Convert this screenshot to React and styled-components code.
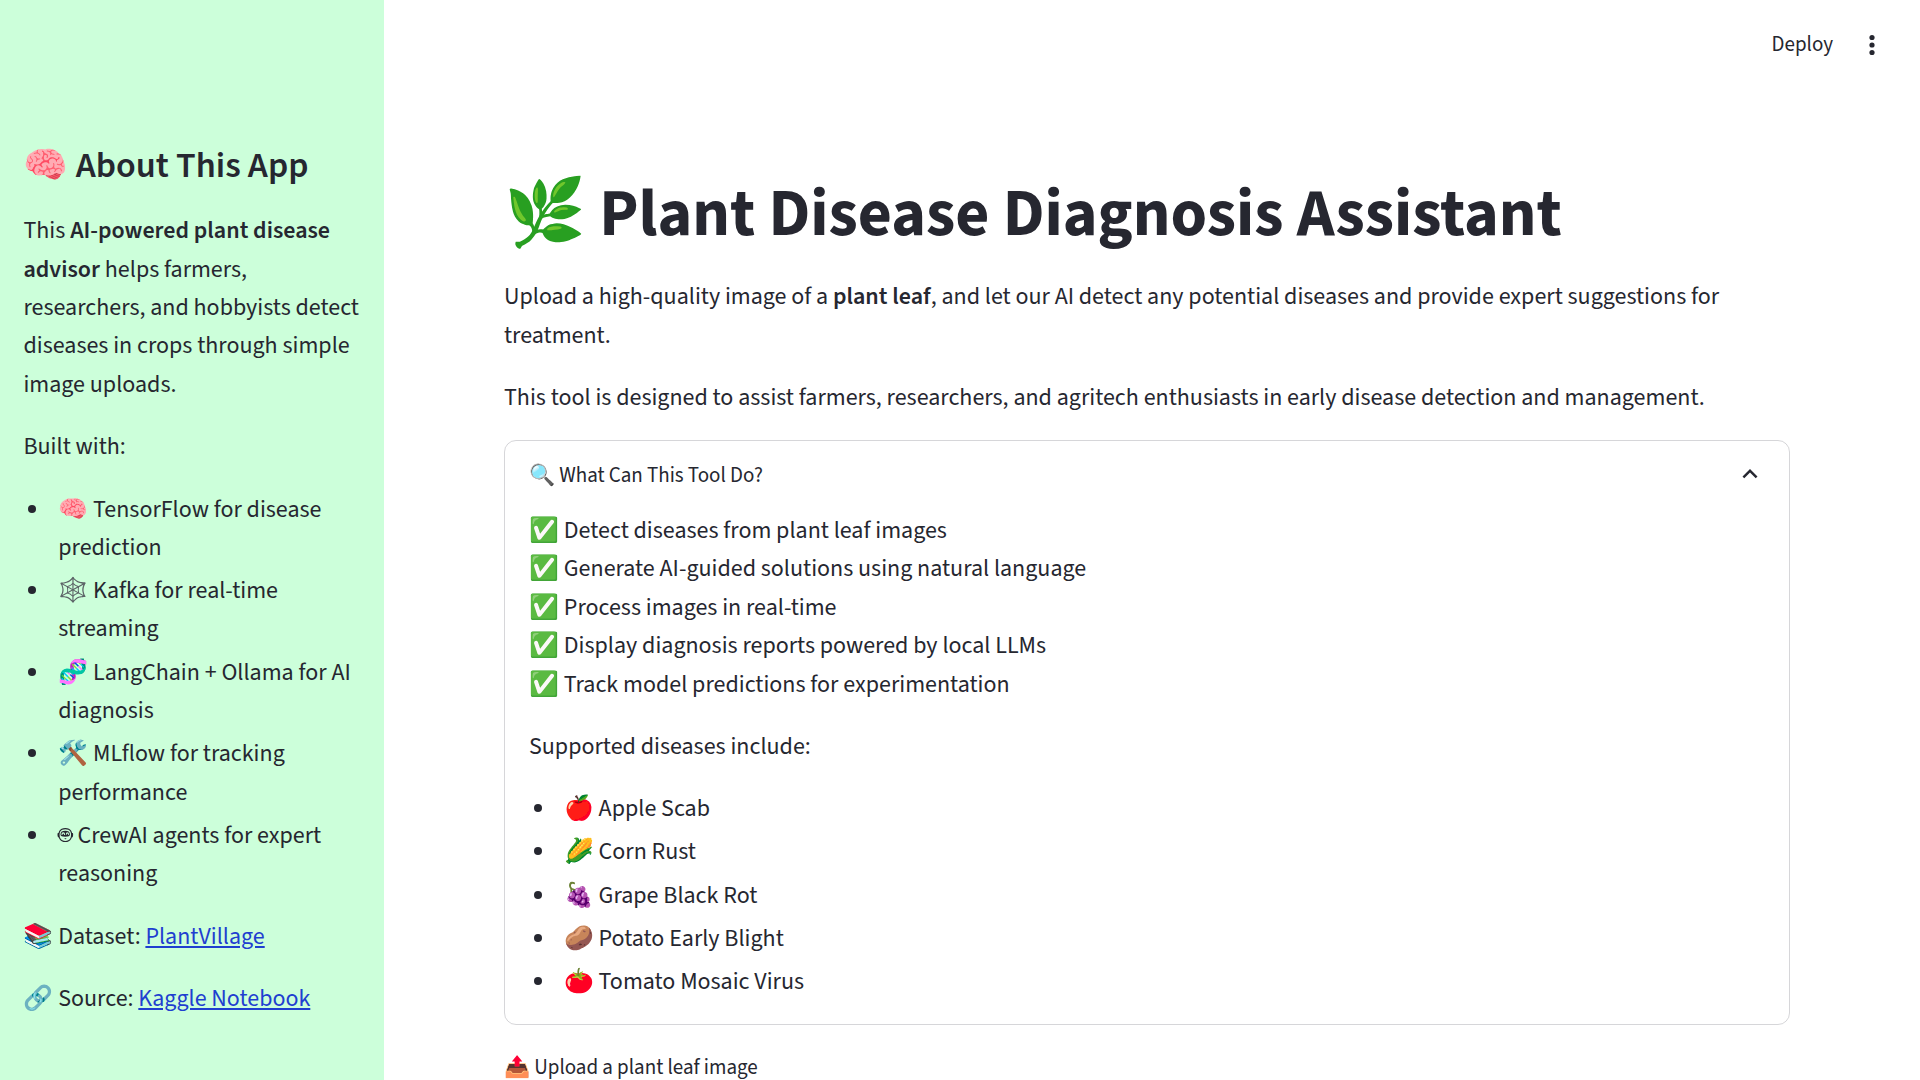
import React from "react";
import styled, { createGlobalStyle } from "styled-components";

const GlobalStyle = createGlobalStyle`
  *, *::before, *::after { box-sizing: border-box; }
  html, body { margin: 0; height: 100%; overflow: hidden; }
  body {
    background: #ffffff;
    color: #262730;
    font-family: "Source Sans 3", "Source Sans Pro", "Noto Sans CJK SC", sans-serif;
    font-size: 24px;
    line-height: 1.6;
  }
`;

const Page = styled.div`
  display: flex;
  width: 100%;
  height: 100vh;
  overflow: hidden;
`;

const Sidebar = styled.aside`
  flex: 0 0 384px;
  height: 100%;
  padding: 143.7px 24px 0 23.45px;
  background: #ccffda;
  overflow: hidden;
`;

const Main = styled.main`
  position: relative;
  flex: 1;
  min-width: 0;
  padding: 145px 130px 0 120px;
`;

const Toolbar = styled.header`
  position: absolute;
  top: 0;
  right: 0;
  height: 90px;
  padding-right: 36px;
  display: flex;
  align-items: center;
  gap: 27px;
  font-size: 21px;
`;

const MenuButton = styled.button`
  display: flex;
  padding: 0;
  border: 0;
  background: none;
  color: inherit;
`;

const Heading = styled.h2`
  margin: 0 0 25.3px;
  font-size: 36px;
  font-weight: 600;
  line-height: 1.2;
`;

const Title = styled.h1`
  margin: 0;
  padding: 30px 0 24px;
  font-size: 66px;
  font-weight: 700;
  line-height: 1.2;
`;

const Paragraph = styled.p`
  margin: 0 0 24px;
`;

const Intro = styled.div`
  margin-bottom: -1px;
`;

const Strong = styled.strong`
  font-weight: 600;
`;

const List = styled.ul`
  margin: 0 0 24px;
  padding: 0;
`;

const Item = styled.li`
  margin: 0.2em 0 0.2em 1.15em;
  padding-left: 0.3em;
  &:first-child { margin-top: 0; }
  &:last-child { margin-bottom: 0; }
`;

const Link = styled.a`
  color: #1f3fd0;
  text-decoration: underline;
`;

const Vivid = styled.span`
  filter: url(#vivid);
`;

const FilterDefs = styled.svg`
  position: absolute;
  width: 0;
  height: 0;
`;

const Expander = styled.section`
  border: 1px solid rgba(49, 51, 63, 0.2);
  border-radius: 12px;
  margin-bottom: 26.6px;
`;

const ExpanderHeader = styled.div`
  display: flex;
  align-items: center;
  justify-content: space-between;
  padding: 17.6px 24px 14.4px;
  font-size: 21px;
`;

const Chevron = styled.svg`
  width: 30px;
  height: 30px;
  margin-top: -3px;
`;

const ExpanderBody = styled.div`
  padding: 5px 24px 0.1px;
  margin-bottom: -2px;
`;

const UploadLabel = styled.label`
  display: block;
  font-size: 21px;
`;

const stack = [
  ["🧠", "TensorFlow for disease prediction"],
  ["🕸️", "Kafka for real-time streaming"],
  ["🧬", "LangChain + Ollama for AI diagnosis"],
  ["🛠️", "MLflow for tracking performance"],
  ["🤖", "CrewAI agents for expert reasoning"],
];

const features = [
  "Detect diseases from plant leaf images",
  "Generate AI-guided solutions using natural language",
  "Process images in real-time",
  "Display diagnosis reports powered by local LLMs",
  "Track model predictions for experimentation",
];

const diseases = [
  ["🍎", "Apple Scab"],
  ["🌽", "Corn Rust"],
  ["🍇", "Grape Black Rot"],
  ["🥔", "Potato Early Blight"],
  ["🍅", "Tomato Mosaic Virus"],
];

function BulletList({ items }) {
  return (
    <List>
      {items.map(([icon, text]) => (
        <Item key={text}>
          <Vivid>{icon}</Vivid> {text}
        </Item>
      ))}
    </List>
  );
}

export default function App() {
  return (
    <Page>
      <GlobalStyle />
      <FilterDefs aria-hidden="true">
        <filter id="vivid" x="-10%" y="-20%" width="120%" height="140%">
          <feColorMatrix
            type="matrix"
            values="1.4 -0.4 0 0 0  -0.08 1.13 -0.05 0 0  0 0 1 0 0  0 0 0 1 0"
          />
        </filter>
      </FilterDefs>
      <Sidebar>
        <Heading><Vivid>🧠</Vivid> About This App</Heading>
        <Paragraph>
          This <Strong>AI-powered plant disease advisor</Strong> helps farmers,
          researchers, and hobbyists detect diseases in crops through simple
          image uploads.
        </Paragraph>
        <Paragraph>Built with:</Paragraph>
        <BulletList items={stack} />
        <Paragraph><Vivid>📚</Vivid> Dataset: <Link href="#">PlantVillage</Link></Paragraph>
        <Paragraph><Vivid>🔗</Vivid> Source: <Link href="#">Kaggle Notebook</Link></Paragraph>
      </Sidebar>
      <Main>
        <Toolbar>
          <span>Deploy</span>
          <MenuButton aria-label="Menu">
            <svg width="24" height="24" viewBox="0 0 24 24" fill="currentColor">
              <circle cx="12" cy="4.5" r="2.6" />
              <circle cx="12" cy="12" r="2.6" />
              <circle cx="12" cy="19.5" r="2.6" />
            </svg>
          </MenuButton>
        </Toolbar>
        <Title><Vivid>🌿</Vivid> Plant Disease Diagnosis Assistant</Title>
        <Intro>
          <Paragraph>
            Upload a high-quality image of a <Strong>plant leaf</Strong>, and let
            our AI detect any potential diseases and provide expert suggestions
            for treatment.
          </Paragraph>
          <Paragraph>
            This tool is designed to assist farmers, researchers, and agritech
            enthusiasts in early disease detection and management.
          </Paragraph>
        </Intro>
        <Expander>
          <ExpanderHeader>
            <span><Vivid>🔍</Vivid> What Can This Tool Do?</span>
            <Chevron viewBox="0 0 24 24" fill="currentColor">
              <path d="M12 8l-6 6 1.41 1.41L12 10.83l4.59 4.58L18 14z" />
            </Chevron>
          </ExpanderHeader>
          <ExpanderBody>
            <Paragraph>
              {features.map((text, i) => (
                <React.Fragment key={text}>
                  {i > 0 && <br />}
                  <Vivid>✅</Vivid> {text}
                </React.Fragment>
              ))}
            </Paragraph>
            <Paragraph>Supported diseases include:</Paragraph>
            <BulletList items={diseases} />
          </ExpanderBody>
        </Expander>
        <UploadLabel><Vivid>📤</Vivid> Upload a plant leaf image</UploadLabel>
      </Main>
    </Page>
  );
}
